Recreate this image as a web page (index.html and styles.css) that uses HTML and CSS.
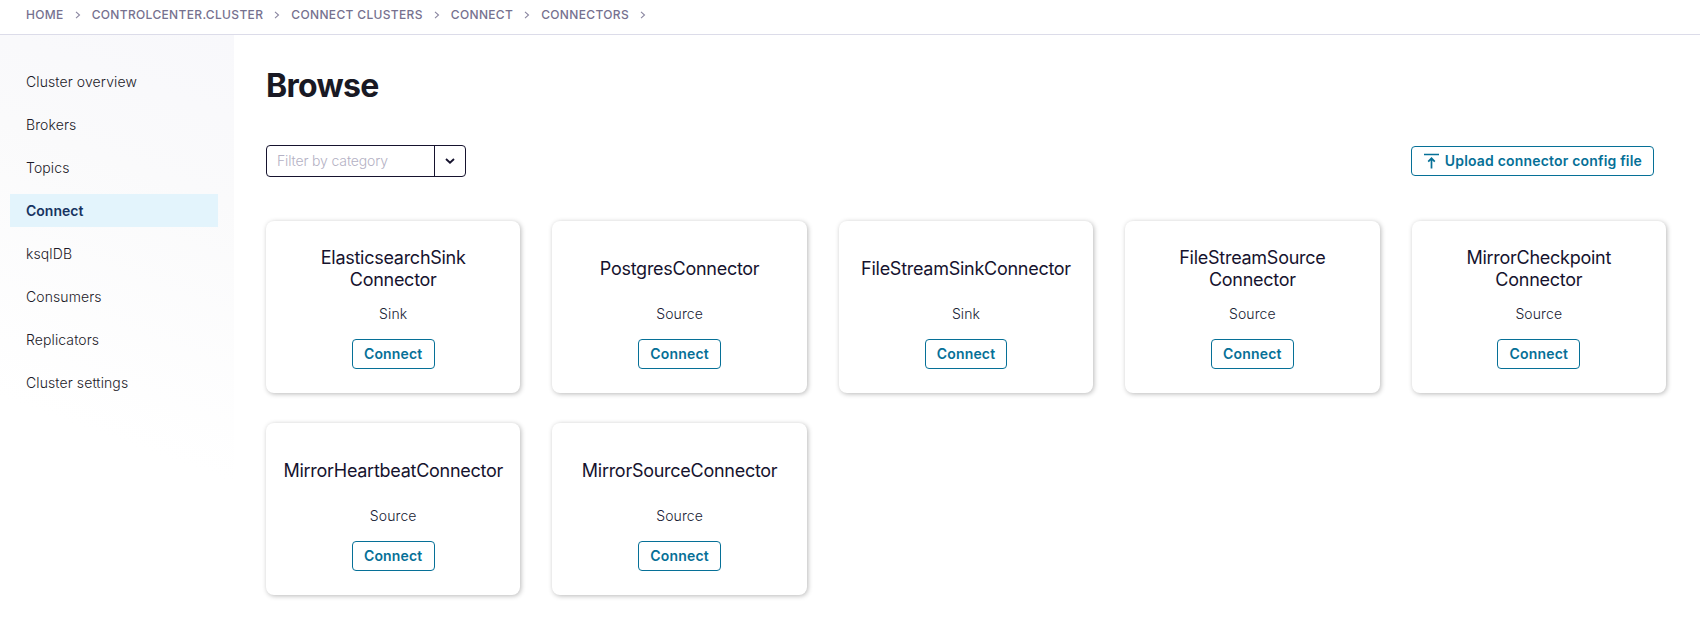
FILE: index.html
```html
<!DOCTYPE html>
<html lang="en">
<head>
<meta charset="utf-8">
<title>Browse connectors</title>
<link rel="stylesheet" href="styles.css">
</head>
<body>
<svg class="sprite" width="0" height="0" aria-hidden="true">
  <symbol id="sep" viewBox="0 0 6 8"><path d="M1 .8 4.5 4 1 7.2" fill="none" stroke="currentColor" stroke-width="1.1"/></symbol>
</svg>
<header class="breadcrumbs">
  <a class="crumb">HOME</a><svg class="sep"><use href="#sep"/></svg>
  <a class="crumb">CONTROLCENTER.CLUSTER</a><svg class="sep"><use href="#sep"/></svg>
  <a class="crumb">CONNECT CLUSTERS</a><svg class="sep"><use href="#sep"/></svg>
  <a class="crumb">CONNECT</a><svg class="sep"><use href="#sep"/></svg>
  <a class="crumb">CONNECTORS</a><svg class="sep"><use href="#sep"/></svg>
</header>
<div class="layout">
  <nav class="sidebar">
    <a class="nav-item">Cluster overview</a>
    <a class="nav-item">Brokers</a>
    <a class="nav-item">Topics</a>
    <a class="nav-item active">Connect</a>
    <a class="nav-item">ksqlDB</a>
    <a class="nav-item">Consumers</a>
    <a class="nav-item">Replicators</a>
    <a class="nav-item">Cluster settings</a>
  </nav>
  <main class="content">
    <h1 class="title">Browse</h1>
    <div class="toolbar">
      <div class="select">
        <span class="placeholder">Filter by category</span>
        <span class="toggle"><svg width="10" height="6" viewBox="0 0 10 6"><path d="M1 1 5 4.6 9 1" fill="none" stroke="currentColor" stroke-width="1.9"/></svg></span>
      </div>
      <button class="button upload"><svg width="15" height="16" viewBox="0 0 15 16"><path d="M0 1.5H15M7.5 15.5V5.5M4.2 8.6 7.5 5.3 10.8 8.6" fill="none" stroke="currentColor" stroke-width="1.7"/></svg>Upload connector config file</button>
    </div>
    <section class="grid">
      <article class="card"><h2 class="name">ElasticsearchSink<br>Connector</h2><p class="type">Sink</p><button class="button">Connect</button></article>
      <article class="card"><h2 class="name">PostgresConnector</h2><p class="type">Source</p><button class="button">Connect</button></article>
      <article class="card"><h2 class="name">FileStreamSinkConnector</h2><p class="type">Sink</p><button class="button">Connect</button></article>
      <article class="card"><h2 class="name">FileStreamSource<br>Connector</h2><p class="type">Source</p><button class="button">Connect</button></article>
      <article class="card"><h2 class="name">MirrorCheckpoint<br>Connector</h2><p class="type">Source</p><button class="button">Connect</button></article>
      <article class="card"><h2 class="name">MirrorHeartbeatConnector</h2><p class="type">Source</p><button class="button">Connect</button></article>
      <article class="card"><h2 class="name">MirrorSourceConnector</h2><p class="type">Source</p><button class="button">Connect</button></article>
    </section>
  </main>
</div>
</body>
</html>
```
FILE: styles.css
```css
* { box-sizing: border-box; }
body {
  margin: 0;
  height: 628px;
  overflow: hidden;
  display: flex;
  flex-direction: column;
  background: #fff;
  color: #16132e;
  font: 300 14px/20px Inter, "Liberation Sans", sans-serif;
}
.sprite { display: none; }
.breadcrumbs {
  display: flex;
  align-items: center;
  flex: none;
  height: 35px;
  padding: 0 26px 5px;
  border-bottom: 1px solid #dcdce9;
  color: #76718f;
  font-size: 12px;
  font-weight: 500;
  letter-spacing: 0.34px;
}
.sep { width: 6px; height: 8px; margin: 1px 11px 0; color: #8a86a0; }
.layout { display: flex; flex: 1; }
.sidebar {
  display: flex;
  flex-direction: column;
  gap: 10px;
  width: 234px;
  padding: 30px 16px 0 10px;
  background: linear-gradient(200deg, #f8f8fb 0%, #fafafb 25%, #fff 66%);
}
.nav-item {
  height: 33px;
  padding-left: 16px;
  line-height: 34px;
  color: #1c1a28;
  letter-spacing: 0.1px;
}
.active { background: #e3f4fc; color: #173361; font-weight: 600; letter-spacing: 0; }
.content { flex: 1; padding: 31px 34px 0 32px; }
.title {
  margin: 0;
  color: #191924;
  font-size: 32px;
  line-height: 40px;
  font-weight: 700;
  letter-spacing: -0.7px;
}
.toolbar {
  display: flex;
  align-items: center;
  justify-content: space-between;
  height: 32px;
  margin-top: 39px;
  padding-right: 12px;
}
.select {
  display: flex;
  width: 200px;
  height: 32px;
  border: 1px solid #16132e;
  border-radius: 4px;
}
.placeholder { flex: 1; padding-left: 10px; line-height: 30px; color: #b4b1c4; letter-spacing: -0.15px; }
.toggle {
  display: flex;
  align-items: center;
  justify-content: center;
  width: 31px;
  border-left: 1px solid #16132e;
}
.button {
  display: flex;
  align-items: center;
  height: 30px;
  padding: 0 11px;
  border: 1px solid #067097;
  border-radius: 4px;
  background: #fff;
  color: #067097;
  font: 600 14px/20px Inter, "Liberation Sans", sans-serif;
  letter-spacing: 0.18px;
  white-space: nowrap;
}
.upload { gap: 6px; padding-left: 12px; }
.grid {
  display: grid;
  grid-template-columns: repeat(5, 1fr);
  gap: 30px 32px;
  margin-top: 44px;
}
.card {
  display: flex;
  flex-direction: column;
  align-items: center;
  height: 172px;
  padding-top: 26px;
  border-radius: 8px;
  background: #fff;
  box-shadow: 1px 1px 5px rgba(0, 0, 0, 0.28);
}
.name {
  display: flex;
  align-items: center;
  height: 44px;
  margin: 0;
  text-align: center;
  font-size: 18px;
  line-height: 22px;
  font-weight: 400;
  letter-spacing: -0.27px;
}
.type { margin: 13px 0 15px; color: #201d35; letter-spacing: 0.1px; }
```
